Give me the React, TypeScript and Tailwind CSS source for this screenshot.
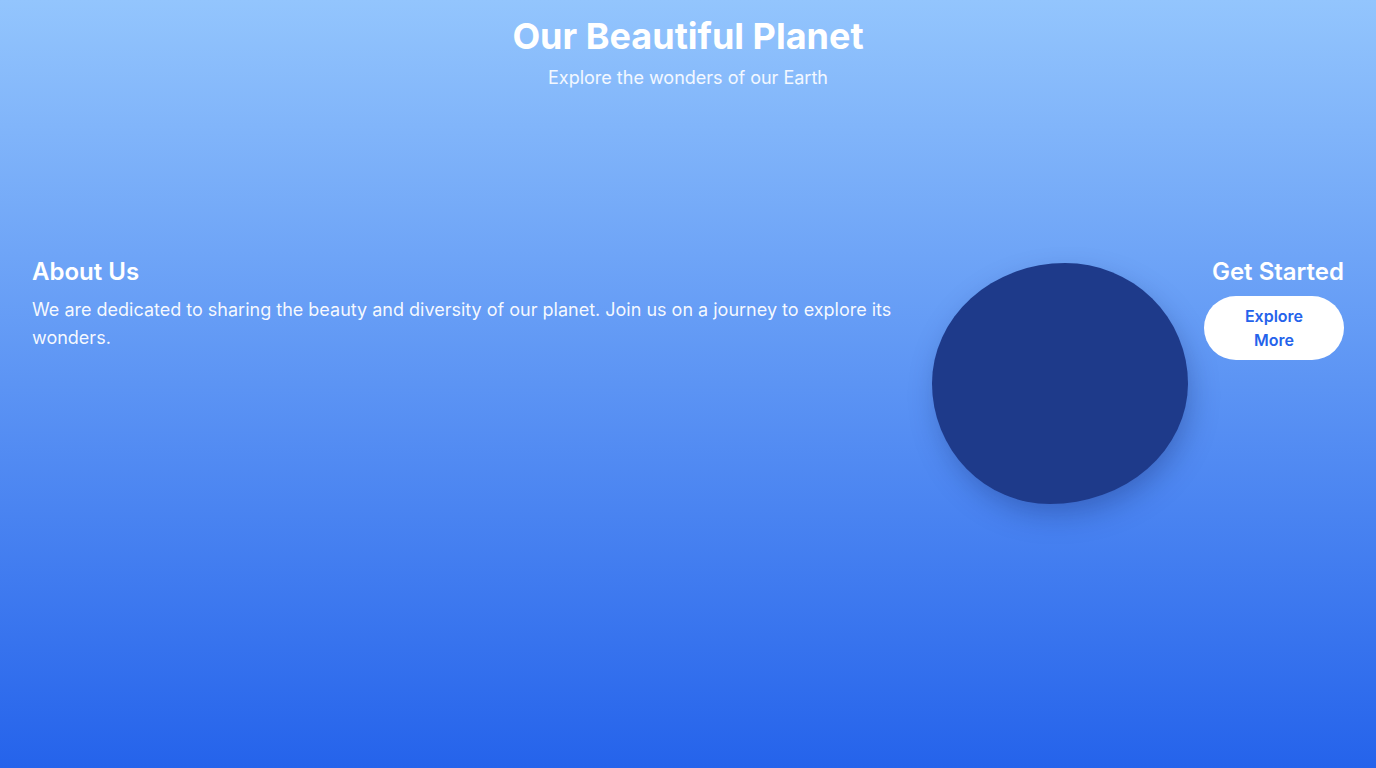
export default function App() {
  return (
    <div
      className="min-h-screen w-full bg-[linear-gradient(to_bottom,#93c5fd,#2563eb)] text-white flex flex-col"
      style={{ fontFamily: "Inter, 'Noto Sans', sans-serif" }}
    >
      <header className="pt-4 text-center">
        <h1 className="text-4xl font-bold">Our Beautiful Planet</h1>
        <p className="mt-2 text-lg text-white/90">Explore the wonders of our Earth</p>
      </header>
      <main className="flex items-start gap-4 px-8 pt-[164px]">
        <section className="flex-1">
          <h2 className="text-2xl font-semibold mb-2">About Us</h2>
          <p className="text-lg leading-7 text-white/95">
            We are dedicated to sharing the beauty and diversity of our planet. Join us on a journey to explore its
            wonders.
          </p>
        </section>
        <div className="mt-[7px] w-64 h-[241px] shrink-0 bg-[#1e3a8a] rounded-[52%_48%_54%_46%/50%_50%_50%_50%] shadow-[4px_12px_30px_-4px_rgba(15,30,90,0.35)]" />
        <section className="w-[140px] shrink-0 text-right">
          <h2 className="text-2xl font-semibold mb-2">Get Started</h2>
          <button className="w-full rounded-full bg-white py-2 px-8 text-base font-semibold text-[#2563eb] text-center">
            Explore More
          </button>
        </section>
      </main>
    </div>
  );
}
